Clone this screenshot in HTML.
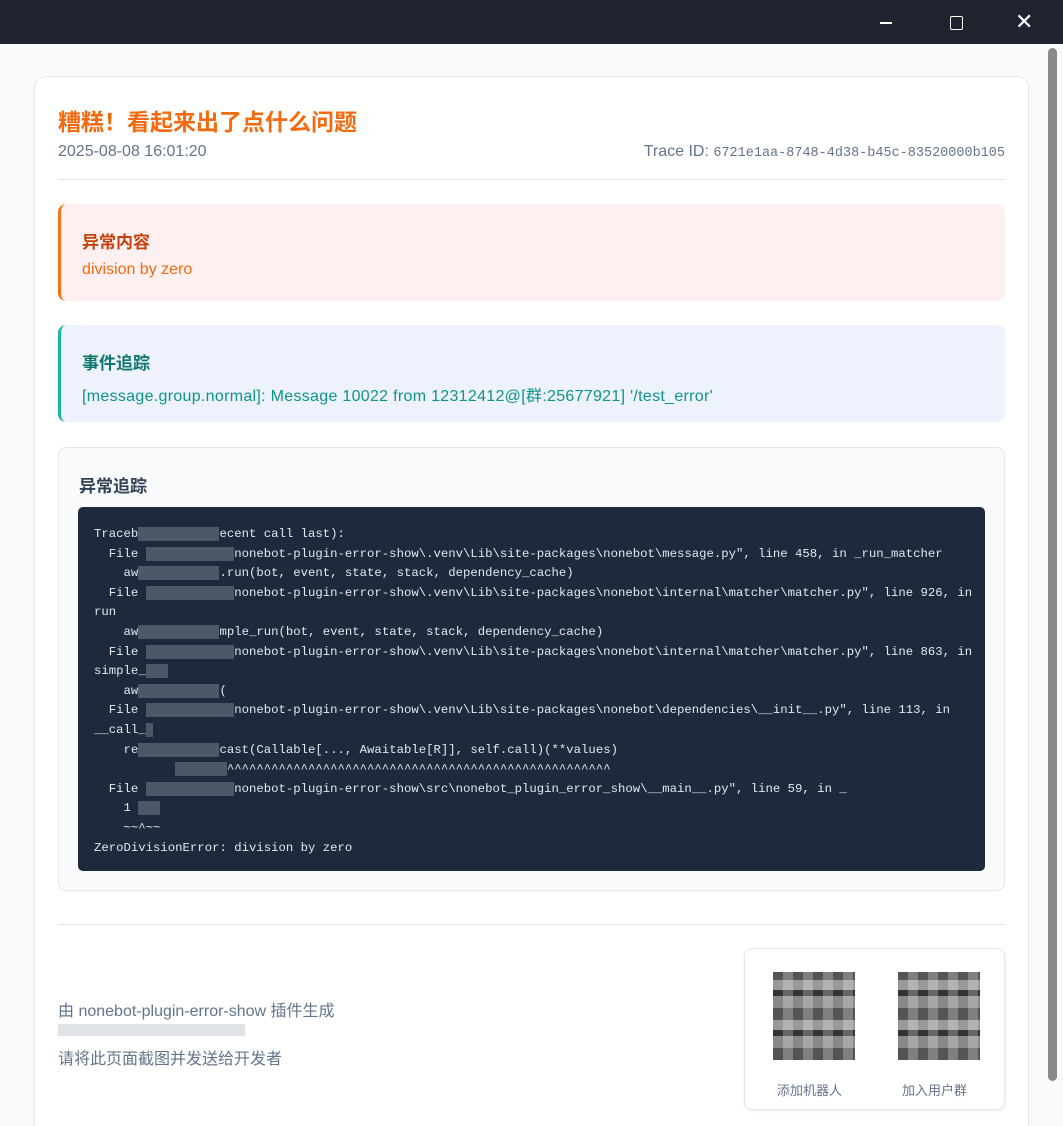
<!DOCTYPE html>
<html><head><meta charset="utf-8"><style>
*{margin:0;padding:0;box-sizing:border-box}
html{width:1063px;height:1126px;overflow:hidden}
body{width:1063px;height:1126px;overflow:hidden;background:#f8fafc;font-family:"Liberation Sans","Noto Sans CJK SC",sans-serif;position:relative}
.tb{position:absolute;left:0;top:0;width:1063px;height:44px;background:#1f2330}
.sb{position:absolute;left:1048px;top:48px;width:9px;height:1033px;background:#8a8a8a;border-radius:5px}
.card{position:absolute;left:34px;top:76px;width:995px;height:1060px;background:#fff;border:1px solid #e5e7eb;border-radius:12px}
.a{position:absolute}
h1{font-size:23px;color:#f46a0e;font-weight:bold}
.box{position:absolute;left:58px;width:947px;border-radius:8px}
.code{position:absolute;left:78px;top:507px;width:907px;height:364px;background:#1e293b;border-radius:5px;color:#e2e8f0;font-family:"Liberation Mono",monospace;font-size:12.3px;line-height:19.6px;padding:18px 0 0 16px;white-space:pre}
.b{background:#5a6374;color:transparent;opacity:.8}
.qr{position:absolute;width:82px;height:88px;background:
repeating-linear-gradient(90deg,rgba(255,255,255,.0) 0 10px,rgba(255,255,255,.25) 10px 20px),
repeating-linear-gradient(0deg,#555 0 12px,#888 12px 24px,#333 24px 30px,#999 30px 40px)}
</style></head><body>
<div class="tb">
<div class="a" style="left:880px;top:22px;width:12px;height:1.5px;background:#fff"></div>
<div class="a" style="left:950px;top:16px;width:13px;height:14px;border:1.5px solid #fff;border-radius:2px"></div>
<div class="a" style="left:1015px;top:9px;color:#fff;font-size:22px;font-weight:300">✕</div>
</div>
<div class="sb"></div>
<div class="card"></div>
<h1 class="a" style="left:58px;top:103px">糟糕！看起来出了点什么问题</h1>
<div class="a" style="left:58px;top:143px;font-size:16px;color:#64748b">2025-08-08 16:01:20</div>
<div class="a" style="right:58px;top:143px;font-size:16px;color:#64748b">Trace ID: <span style="font-family:'Liberation Mono',monospace;font-size:13.5px">6721e1aa-8748-4d38-b45c-83520000b105</span></div>
<div class="a" style="left:58px;top:179px;width:947px;height:1px;background:#e5e7eb"></div>

<div class="box" style="top:204px;height:97px;background:#fef0f0;border-left:3px solid #f97316">
<div class="a" style="left:21px;top:24px;font-size:17px;font-weight:bold;color:#c2410c">异常内容</div>
<div class="a" style="left:21px;top:57px;font-size:16px;color:#f46a0e">division by zero</div></div>

<div class="box" style="top:325px;height:97px;background:#eef2fd;border-left:3px solid #14b8a6">
<div class="a" style="left:21px;top:24px;font-size:17px;font-weight:bold;color:#0f766e">事件追踪</div>
<div class="a" style="left:21px;top:57px;font-size:16px;color:#0d9488;letter-spacing:0.3px">[message.group.normal]: Message 10022 from 12312412@[群:25677921] '/test_error'</div></div>

<div class="box" style="top:447px;height:444px;background:#f8fafc;border:1px solid #e5e7eb">
<div class="a" style="left:20px;top:24px;font-size:17px;font-weight:bold;color:#334155">异常追踪</div></div>
<div class="code">Traceb<span class="b">ack (most r</span>ecent call last):
  File <span class="b">"C:\xxxxxxx\</span>nonebot-plugin-error-show\.venv\Lib\site-packages\nonebot\message.py", line 458, in _run_matcher
    aw<span class="b">ait matcher</span>.run(bot, event, state, stack, dependency_cache)
  File <span class="b">"C:\xxxxxxx\</span>nonebot-plugin-error-show\.venv\Lib\site-packages\nonebot\internal\matcher\matcher.py", line 926, in
run
    aw<span class="b">ait self.si</span>mple_run(bot, event, state, stack, dependency_cache)
  File <span class="b">"C:\xxxxxxx\</span>nonebot-plugin-error-show\.venv\Lib\site-packages\nonebot\internal\matcher\matcher.py", line 863, in
simple_<span class="b">run</span>
    aw<span class="b">ait handler</span>(
  File <span class="b">"C:\xxxxxxx\</span>nonebot-plugin-error-show\.venv\Lib\site-packages\nonebot\dependencies\__init__.py", line 113, in
__call_<span class="b">_</span>
    re<span class="b">turn await </span>cast(Callable[..., Awaitable[R]], self.call)(**values)
           <span class="b">^^^^^^^</span>^^^^^^^^^^^^^^^^^^^^^^^^^^^^^^^^^^^^^^^^^^^^^^^^^^^^
  File <span class="b">"C:\xxxxxxx\</span>nonebot-plugin-error-show\src\nonebot_plugin_error_show\__main__.py", line 59, in _
    1 <span class="b">/ 0</span>
    ~~^~~
ZeroDivisionError: division by zero</div>

<div class="a" style="left:58px;top:924px;width:947px;height:1px;background:#e5e7eb"></div>
<div class="a" style="left:58px;top:997px;font-size:16px;color:#64748b">由 nonebot-plugin-error-show 插件生成</div>
<div class="a" style="left:58px;top:1024px;width:187px;height:12px;background:#d8dce2;opacity:.8"></div>
<div class="a" style="left:58px;top:1045px;font-size:16px;color:#64748b">请将此页面截图并发送给开发者</div>
<div class="a" style="left:744px;top:948px;width:261px;height:162px;background:#fff;border:1px solid #e5e7eb;border-radius:8px;box-shadow:0 1px 3px rgba(0,0,0,.08)"></div>
<div class="qr" style="left:773px;top:972px"></div>
<div class="qr" style="left:898px;top:972px"></div>
<div class="a" style="left:777px;top:1080px;font-size:13px;color:#64748b">添加机器人</div>
<div class="a" style="left:902px;top:1080px;font-size:13px;color:#64748b">加入用户群</div>
</body></html>
